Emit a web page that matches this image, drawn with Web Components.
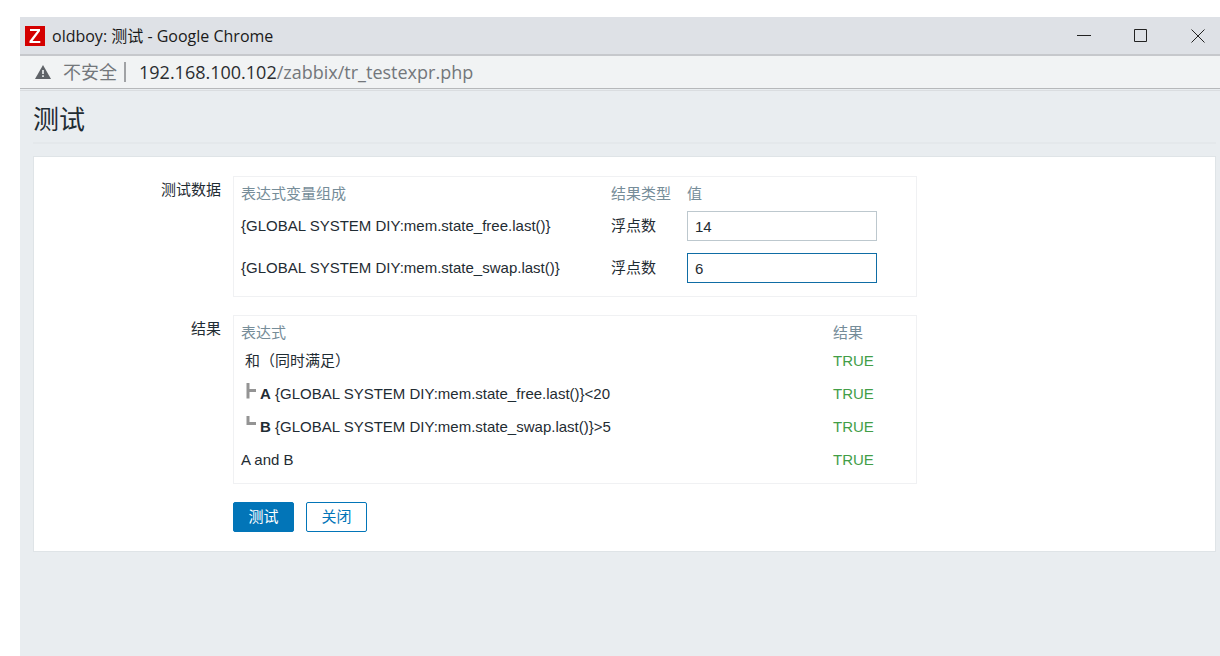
<!DOCTYPE html>
<html lang="zh-CN">
<head>
<meta charset="utf-8">
<title>oldboy: 测试</title>
<style>
  html, body { margin: 0; min-height: 100%; background: #fff; }
  body { display: flex; flex-direction: column; min-height: 100vh;
    font: 15px/20px "Liberation Sans", "Noto Sans CJK SC", sans-serif; color: #1f2c33; }
</style>
</head>
<body>
<browser-window>
  <title-bar slot="title">oldboy: 测试 - Google Chrome</title-bar>
  <address-bar slot="address" host="192.168.100.102" path="/zabbix/tr_testexpr.php">不安全</address-bar>
  <test-page heading="测试">
    <form-row label="测试数据"><test-data></test-data></form-row>
    <form-row label="结果"><test-results></test-results></form-row>
    <form-row>
      <action-button primary>测试</action-button>
      <action-button>关闭</action-button>
    </form-row>
  </test-page>
</browser-window>

<script>
const define = (name, html, setup) => {
  const template = document.createElement('template');
  template.innerHTML = html;
  customElements.define(name, class extends HTMLElement {
    constructor() {
      super();
      this.attachShadow({ mode: 'open' }).append(template.content.cloneNode(true));
    }
    connectedCallback() { if (setup) setup(this, this.shadowRoot); }
  });
};

define('browser-window', `
  <style>
    :host { display: flex; flex-direction: column; flex: 1; margin: 17px 0 0 20px; background: #e9edf0; }
    main { flex: 1; border-top: 1px solid #dadde0; margin-top: 1px; }
  </style>
  <slot name="title"></slot>
  <slot name="address"></slot>
  <main><slot></slot></main>`);

define('title-bar', `
  <style>
    :host { display: flex; align-items: center; height: 37px; padding: 0 15px 0 5px;
      background: #dee1e6; border-bottom: 2px solid #c6c8cc; color: #1a1a1a;
      font: 16px/24px "Open Sans", "Noto Sans CJK SC", sans-serif; }
    .logo { width: 20px; height: 20px; margin-right: 7px; }
    .text { flex: 1; white-space: nowrap; }
    .controls { display: flex; gap: 43px; }
    button { width: 14px; height: 36px; padding: 0; border: 0; background: none;
      display: grid; place-items: center; }
    svg { display: block; }
    button path { fill: none; stroke: #222; }
  </style>
  <svg class="logo" viewBox="0 0 20 20" aria-hidden="true">
    <path fill="#d40000" d="M0 0h20v20H0z"/>
    <path fill="#fff" d="M5 3h10v2L7.500 15H15.300v2H4.500v-2L12.200 5H5z"/>
  </svg>
  <span class="text"><slot></slot></span>
  <div class="controls">
    <button aria-label="最小化"><svg width="14" height="14"><path d="M0 6.500h14"/></svg></button>
    <button aria-label="最大化"><svg width="14" height="14"><path d="M.5.5h12v12H.5z"/></svg></button>
    <button aria-label="关闭窗口"><svg width="14" height="14"><path d="M.5.500l13 13M13.500.5l-13 13"/></svg></button>
  </div>`);

define('address-bar', `
  <style>
    :host { display: flex; align-items: center; height: 32px; padding-left: 15px;
      background: #f1f3f4; border-bottom: 1px solid #b6b8ba; white-space: nowrap;
      font: 18px/24px "Open Sans", "Noto Sans CJK SC", sans-serif; color: #73777b; }
    svg { width: 16px; height: 14px; margin-right: 12px; }
    .divider { width: 2px; height: 20px; margin: 0 13px 0 7px; background: #a0a2a5; }
    .host { color: #2b2d30; }
  </style>
  <svg viewBox="0 0 16 14" aria-hidden="true">
    <path fill="#5f6368" d="M8 0l8 14H0z"/><path fill="#f1f3f4" d="M7.200 5h1.600v4H7.200zM7.200 10.300h1.600v1.700H7.200z"/>
  </svg>
  <span><slot></slot></span><span class="divider"></span>
  <span class="host"></span><span class="path"></span>`,
  (el, root) => {
    root.querySelector('.host').textContent = el.getAttribute('host');
    root.querySelector('.path').textContent = el.getAttribute('path');
  });

define('test-page', `
  <style>
    :host { display: block; padding: 0 4px 20px 13px; }
    h1 { margin: 0 0 12px; padding: 9px 0 2px; font-size: 26px; line-height: 40px; font-weight: 400;
      border-bottom: 2px solid #e4e8eb; }
    form { display: flex; flex-direction: column; gap: 18px; padding: 19px 0;
      background: #fff; border: 1px solid #dfe4e7; }
  </style>
  <h1></h1>
  <form><slot></slot></form>`,
  (el, root) => {
    root.querySelector('h1').textContent = el.getAttribute('heading');
    root.querySelector('form').addEventListener('submit', e => e.preventDefault());
  });

define('form-row', `
  <style>
    :host { display: flex; gap: 12px; }
    .label { flex: none; width: 187px; padding-top: 4px; text-align: right; }
    .field { display: flex; gap: 12px; min-width: 0; flex: 1; }
  </style>
  <div class="label" id="label"></div>
  <div class="field" role="group" aria-labelledby="label"><slot></slot></div>`,
  (el, root) => { root.querySelector('.label').textContent = el.getAttribute('label') || ''; });

const tableStyle = `
    :host { display: block; box-sizing: border-box; flex: 0 1 684px; min-width: 0;
      padding: 6px 7px 7px; border: 1px solid #f0f1f3; }
    table { width: 100%; border-collapse: collapse; table-layout: fixed; }
    th, td { padding: 0; text-align: left; font-weight: 400; white-space: nowrap; }
    th { height: 22px; color: #768d99; }`;

define('test-data', `
  <style>${tableStyle}
    td { height: 42px; }
    .expression { width: 370px; }
    .type { width: 76px; }
    input { display: block; box-sizing: border-box; width: 190px; height: 30px; padding: 0 7px;
      border: 1px solid #bdc8ce; border-radius: 0; background: #fff; color: inherit; font: inherit; outline: 0; }
    input.active, input:focus { border-color: #0f6da5; }
  </style>
  <table>
    <thead><tr><th class="expression">表达式变量组成</th><th class="type">结果类型</th><th>值</th></tr></thead>
    <tbody>
      <tr><td><label for="free">{GLOBAL SYSTEM DIY:mem.state_free.last()}</label></td><td>浮点数</td>
        <td><input id="free" type="text" value="14"></td></tr>
      <tr><td><label for="swap">{GLOBAL SYSTEM DIY:mem.state_swap.last()}</label></td><td>浮点数</td>
        <td><input id="swap" class="active" type="text" value="6"></td></tr>
    </tbody>
  </table>`);

define('test-results', `
  <style>${tableStyle}
    td { height: 33px; }
    .expression { width: 592px; }
    .true { color: #429e47; }
    .root { padding-left: 4px; }
    svg { width: 10px; height: 16px; margin: 0 4px 0 5px; vertical-align: 0; }
    path { fill: #949494; }
  </style>
  <table>
    <thead><tr><th class="expression">表达式</th><th>结果</th></tr></thead>
    <tbody>
      <tr><td class="root">和（同时满足）</td><td class="true">TRUE</td></tr>
      <tr><td><svg viewBox="0 0 10 16" aria-hidden="true"><path d="M.5 0h3v6H10v3H3.500v6.500h-3z"/></svg><b>A</b> {GLOBAL SYSTEM DIY:mem.state_free.last()}&lt;20</td><td class="true">TRUE</td></tr>
      <tr><td><svg viewBox="0 0 10 16" aria-hidden="true"><path d="M.5 0h3v6H10v3H.5z"/></svg><b>B</b> {GLOBAL SYSTEM DIY:mem.state_swap.last()}&gt;5</td><td class="true">TRUE</td></tr>
      <tr><td>A and B</td><td class="true">TRUE</td></tr>
    </tbody>
  </table>`);

define('action-button', `
  <style>
    :host { display: block; }
    button { display: block; height: 30px; padding: 0 14px; border: 1px solid #0275b8; border-radius: 2px;
      background: #fff; color: #0275b8; font: inherit; min-width: 61px; white-space: nowrap; }
    :host([primary]) button { background: #0275b8; color: #fff; }
  </style>
  <button type="button"><slot></slot></button>`);
</script>
</body>
</html>
